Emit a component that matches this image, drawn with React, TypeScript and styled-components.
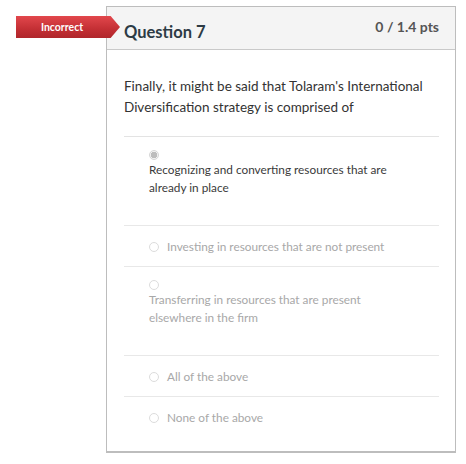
import styled, { createGlobalStyle } from 'styled-components';

const GlobalStyle = createGlobalStyle`
  html, body {
    margin: 0;
    padding: 0;
    background: #ffffff;
    font-family: Lato, "Noto Sans", "Liberation Sans", sans-serif;
  }
`;

const Page = styled.div`
  padding: 6px 0 0 106px;
`;

const Card = styled.div`
  position: relative;
  width: 350px;
  height: 447px;
  box-sizing: border-box;
  border: 1px solid #bdbdbd;
  border-bottom-width: 2px;
  background: #fff;
`;

const Badge = styled.div`
  position: absolute;
  left: -91px;
  top: 9px;
  width: 104px;
  height: 22px;
  padding-right: 12px;
  box-sizing: border-box;
  display: flex;
  align-items: center;
  justify-content: center;
  background: linear-gradient(to bottom, #e2474c 0%, #c32f34 60%, #b0262b 100%);
  color: #fff;
  font-size: 10.5px;
  font-weight: 700;
  clip-path: polygon(0 0, 91% 0, 100% 50%, 91% 100%, 0 100%);
`;

const Header = styled.div`
  height: 42px;
  display: flex;
  justify-content: space-between;
  align-items: flex-start;
  padding: 0 16px 0 17px;
  background: #f4f4f4;
  border-bottom: 1px solid #c9c9c9;
`;

const Title = styled.div`
  margin-top: 15px;
  font-size: 16.5px;
  font-weight: 700;
  color: #2d3b45;
`;

const Points = styled.div`
  margin-top: 11px;
  font-size: 14px;
  font-weight: 700;
  color: #555;
`;

const Body = styled.div`
  padding: 0 16px 0 17px;
`;

const QuestionText = styled.p`
  margin: 0;
  padding: 26px 0 18px;
  font-size: 13.5px;
  line-height: 21px;
  color: #333;
  border-bottom: 1px solid #e3e3e3;
`;

const Answer = styled.div<{ $stacked?: boolean; $last?: boolean }>`
  display: flex;
  flex-direction: ${({ $stacked }) => ($stacked ? 'column' : 'row')};
  align-items: ${({ $stacked }) => ($stacked ? 'flex-start' : 'center')};
  gap: ${({ $stacked }) => ($stacked ? '1px' : '8px')};
  padding: ${({ $stacked }) => ($stacked ? '13px 0 28px 25px' : '12px 0 10px 25px')};
  border-bottom: ${({ $last }) => ($last ? 'none' : '1px solid #e8e8e8')};
`;

const Radio = styled.span<{ $checked?: boolean }>`
  flex: none;
  width: 10px;
  height: 10px;
  border-radius: 50%;
  box-sizing: border-box;
  border: 1px solid ${({ $checked }) => ($checked ? '#d6d6d6' : '#dcdcdc')};
  background: ${({ $checked }) =>
    $checked ? 'radial-gradient(circle, #bdbdbd 0 3px, #f2f2f2 3.5px)' : '#fff'};
`;

const AnswerText = styled.span<{ $chosen?: boolean }>`
  max-width: 250px;
  font-size: 11.8px;
  line-height: 18px;
  color: ${({ $chosen }) => ($chosen ? '#3a3a3a' : '#a8a8a8')};
`;

const answers = [
  { text: 'Recognizing and converting resources that are already in place', stacked: true, chosen: true },
  { text: 'Investing in resources that are not present' },
  { text: 'Transferring in resources that are present elsewhere in the firm', stacked: true },
  { text: 'All of the above' },
  { text: 'None of the above' },
];

export default function App() {
  return (
    <Page>
      <GlobalStyle />
      <Card>
        <Badge>Incorrect</Badge>
        <Header>
          <Title>Question 7</Title>
          <Points>0 / 1.4 pts</Points>
        </Header>
        <Body>
          <QuestionText>
            Finally, it might be said that Tolaram's International Diversification strategy is comprised of
          </QuestionText>
          {answers.map((a, i) => (
            <Answer key={a.text} $stacked={a.stacked} $last={i === answers.length - 1}>
              <Radio $checked={a.chosen} />
              <AnswerText $chosen={a.chosen}>{a.text}</AnswerText>
            </Answer>
          ))}
        </Body>
      </Card>
    </Page>
  );
}
